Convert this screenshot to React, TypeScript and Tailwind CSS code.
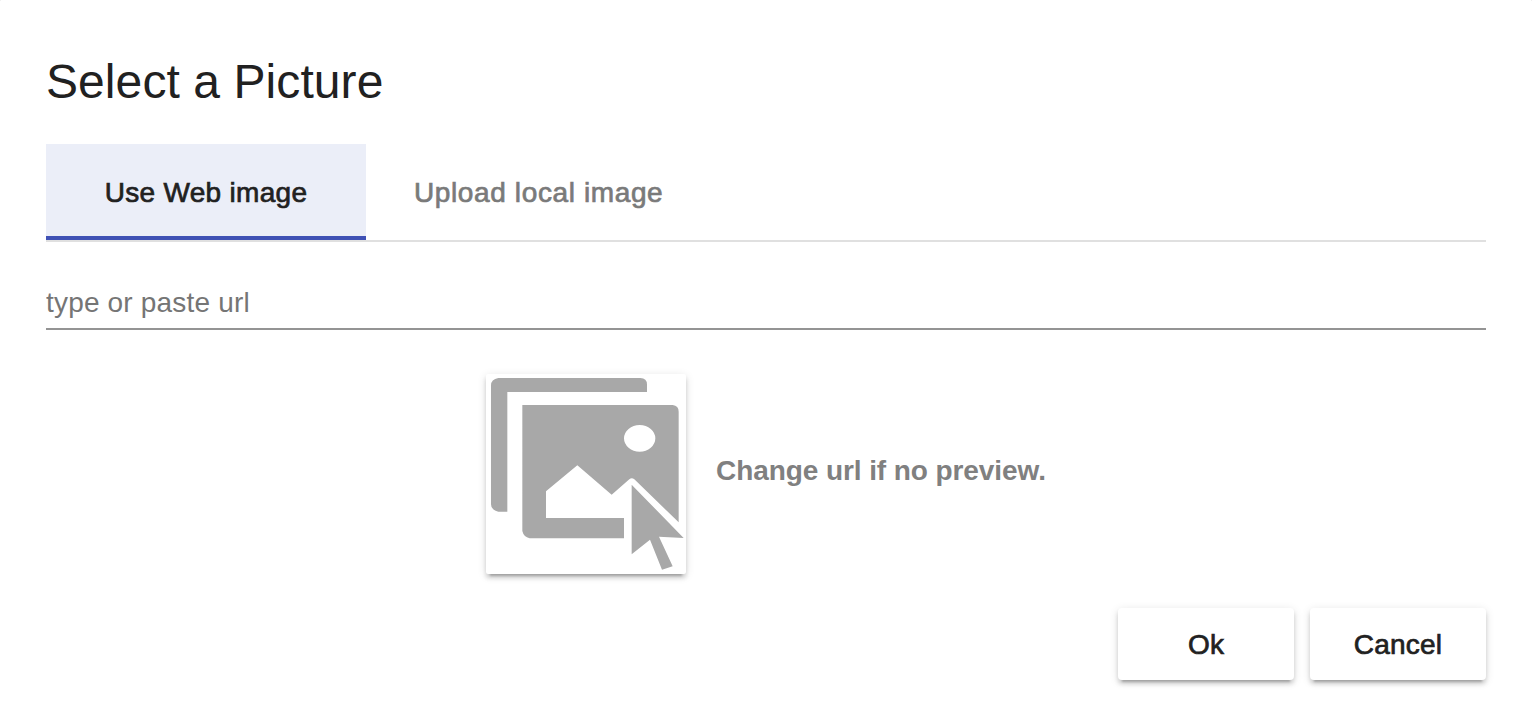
import { useState } from "react";

const RAISED =
  "bg-white shadow-[0_6px_2px_-4px_rgba(0,0,0,0.2),0_4px_4px_0_rgba(0,0,0,0.14),0_2px_10px_0_rgba(0,0,0,0.12)]";

function PicturePlaceholder() {
  return (
    <svg viewBox="0 0 600 600" className="block size-full blur-[0.6px]" fill="#a8a8a8" aria-hidden="true">
      <path d="M37 12H463Q483 12 483 32V54H64V413H37Q15 407 15 391V34Q15 16 37 12Z" />
      <path
        fillRule="evenodd"
        d="M109 93H560Q578 95 578 113V445L445 316Q437 310 430 316L377 362L274 274L180 352V432H414V493H131Q113 489 109 471ZM508 193A47 40 0 1 0 414 193A47 40 0 1 0 508 193Z"
      />
      <path d="M437 332L593 492L519 488L560 577L528 587L492 497L437 541Z" />
    </svg>
  );
}

function ActionButton({ label }: { label: string }) {
  return (
    <button
      className={`h-[72px] w-[176px] rounded pt-px text-[28px] leading-[72px] tracking-[0.2px] text-[#212121] [-webkit-text-stroke:0.7px_#212121] ${RAISED}`}
    >
      {label}
    </button>
  );
}

export default function App() {
  const [url, setUrl] = useState("");

  return (
    <div className="bg-[#c8c8c8]">
      <div className="flex h-[702px] w-full flex-col rounded-t-[1px] bg-white px-[46px] pt-[48px] font-['Liberation_Sans',Arial,sans-serif]">
        <h1 className="h-16 text-[48px] leading-[68px] text-[#212121]">
          <span className="tracking-[0.08px]">Select a Picture</span>
        </h1>

        <div className="mt-8 flex h-[98px] border-b-2 border-[#e0e0e0]" role="tablist">
          <button
            role="tab"
            className="h-24 w-[320px] border-b-4 border-[#3f51b5] bg-[#ebeef8] pt-1.5 text-[28px] text-[#212121] [-webkit-text-stroke:0.7px_#212121]"
          >
            <span className="tracking-[0.3px]">Use Web image</span>
          </button>
          <button
            role="tab"
            className="h-24 px-12 pt-0.5 text-[28px] text-[#7a7a7a] [-webkit-text-stroke:0.7px_#7a7a7a]"
          >
            <span className="tracking-[0.62px]">Upload local image</span>
          </button>
        </div>

        <input
          className="mt-[34px] h-[54px] w-full border-b-2 border-[#949494] pt-0.5 text-[28px] tracking-[0.18px] text-[#212121] outline-none placeholder:text-[#757575]"
          placeholder="type or paste url"
          value={url}
          onChange={(e) => setUrl(e.target.value)}
        />

        <div className="mt-11 flex items-center pl-[440px]">
          <div className={`size-[200px] rounded-[2px] ${RAISED}`}>
            <PicturePlaceholder />
          </div>
          <p className="ml-[30px] pb-1.5 text-[28px] font-bold tracking-[-0.08px] text-[#808080]">
            Change url if no preview.
          </p>
        </div>

        <div className="mt-[34px] flex justify-end gap-4">
          <ActionButton label="Ok" />
          <ActionButton label="Cancel" />
        </div>
      </div>
    </div>
  );
}
